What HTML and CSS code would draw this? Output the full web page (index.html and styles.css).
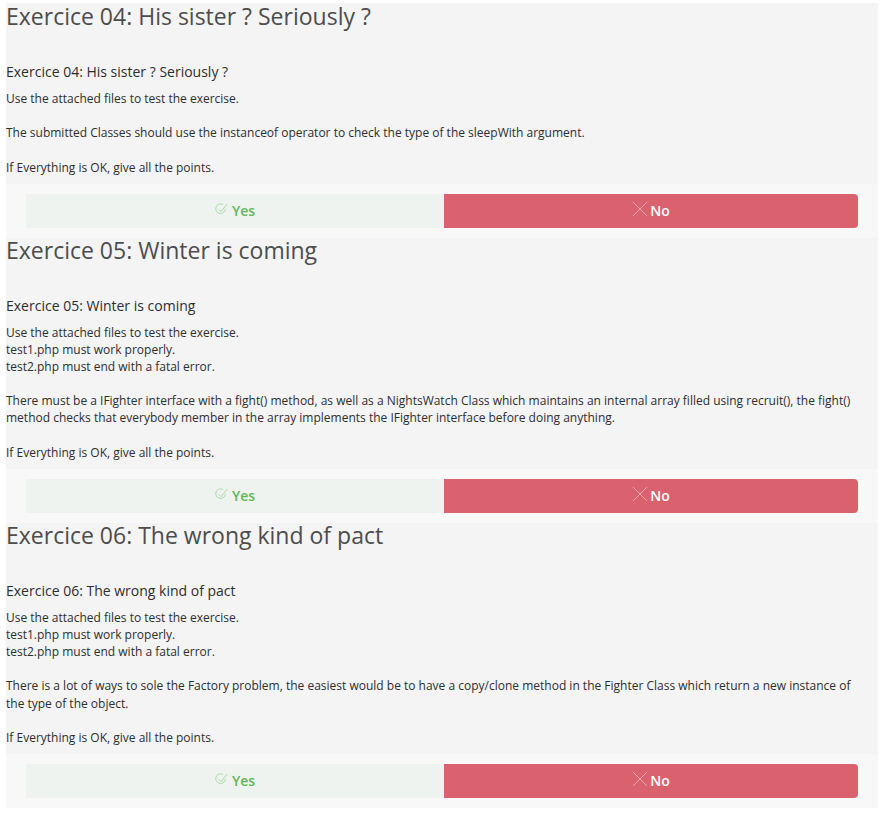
FILE: index.html
```html
<!DOCTYPE html>
<html>
<head>
<meta charset="utf-8">
<link rel="stylesheet" href="styles.css">
</head>
<body>
<div class="page">
  <section class="exercise first">
    <h3 class="ex-title">Exercice 04: His sister ? Seriously ?</h3>
    <h4 class="ex-sub">Exercice 04: His sister ? Seriously ?</h4>
    <p class="ex-body">Use the attached files to test the exercise.<br><br>The submitted Classes should use the instanceof operator to check the type of the sleepWith argument.<br><br>If Everything is OK, give all the points.</p>
  </section>
  <div class="actions">
    <button class="btn yes"><svg class="ico-check" viewBox="0 0 14 14" width="13" height="13"><path d="M11.2 6.2A5.2 5.2 0 1 1 8.6 1.6" fill="none" stroke="#9fd49f" stroke-width="0.9"/><path d="M3.8 6.6L6.4 9.3L13.2 1" fill="none" stroke="#9fd49f" stroke-width="0.9"/></svg><span>Yes</span></button>
    <button class="btn no"><svg class="ico-x" viewBox="0 0 16 16" width="16" height="16"><path d="M1 1L15 15M15 1L1 15" stroke="#f0a2aa" stroke-width="1"/></svg><span>No</span></button>
  </div>

  <section class="exercise">
    <h3 class="ex-title">Exercice 05: Winter is coming</h3>
    <h4 class="ex-sub">Exercice 05: Winter is coming</h4>
    <p class="ex-body">Use the attached files to test the exercise.<br>test1.php must work properly.<br>test2.php must end with a fatal error.<br><br>There must be a IFighter interface with a fight() method, as well as a NightsWatch Class which maintains an internal array filled using recruit(), the fight() method checks that everybody member in the array implements the IFighter interface before doing anything.<br><br>If Everything is OK, give all the points.</p>
  </section>
  <div class="actions">
    <button class="btn yes"><svg class="ico-check" viewBox="0 0 14 14" width="13" height="13"><path d="M11.2 6.2A5.2 5.2 0 1 1 8.6 1.6" fill="none" stroke="#9fd49f" stroke-width="0.9"/><path d="M3.8 6.6L6.4 9.3L13.2 1" fill="none" stroke="#9fd49f" stroke-width="0.9"/></svg><span>Yes</span></button>
    <button class="btn no"><svg class="ico-x" viewBox="0 0 16 16" width="16" height="16"><path d="M1 1L15 15M15 1L1 15" stroke="#f0a2aa" stroke-width="1"/></svg><span>No</span></button>
  </div>

  <section class="exercise">
    <h3 class="ex-title">Exercice 06: The wrong kind of pact</h3>
    <h4 class="ex-sub">Exercice 06: The wrong kind of pact</h4>
    <p class="ex-body">Use the attached files to test the exercise.<br>test1.php must work properly.<br>test2.php must end with a fatal error.<br><br>There is a lot of ways to sole the Factory problem, the easiest would be to have a copy/clone method in the Fighter Class which return a new instance of the type of the object.<br><br>If Everything is OK, give all the points.</p>
  </section>
  <div class="actions">
    <button class="btn yes"><svg class="ico-check" viewBox="0 0 14 14" width="13" height="13"><path d="M11.2 6.2A5.2 5.2 0 1 1 8.6 1.6" fill="none" stroke="#9fd49f" stroke-width="0.9"/><path d="M3.8 6.6L6.4 9.3L13.2 1" fill="none" stroke="#9fd49f" stroke-width="0.9"/></svg><span>Yes</span></button>
    <button class="btn no"><svg class="ico-x" viewBox="0 0 16 16" width="16" height="16"><path d="M1 1L15 15M15 1L1 15" stroke="#f0a2aa" stroke-width="1"/></svg><span>No</span></button>
  </div>
</div>
</body>
</html>
```

FILE: styles.css
```css
html, body {
  margin: 0;
  padding: 0;
  background: #ffffff;
}
body {
  font-family: "Open Sans", "Noto Sans", sans-serif;
  color: #333333;
}
.page {
  margin: 3px 9px 6px 6px;
  width: 872px;
}
.exercise {
  background: #f4f4f4;
  padding: 0 8px 8px 0;
}
.exercise.first {
  padding-top: 1px;
}
.ex-title {
  margin: 0;
  font-size: 23px;
  line-height: 24px;
  font-weight: 400;
  color: #4d4d4d;
}
.ex-sub {
  margin: 36px 0 10px;
  font-size: 14px;
  line-height: 16px;
  font-weight: 400;
  color: #2e2e2e;
}
.ex-body {
  margin: 0;
  font-size: 12px;
  line-height: 17.14px;
  color: #2e2e2e;
}
.actions {
  background: #f8f8f8;
  padding: 10px 20px;
  display: flex;
}
.btn {
  flex: 1 1 0;
  height: 34px;
  border: 0;
  margin: 0;
  font-family: "Open Sans", "Noto Sans", sans-serif;
  font-size: 14px;
  font-weight: 600;
  display: flex;
  align-items: center;
  justify-content: center;
  gap: 4px;
  cursor: pointer;
}
.btn.yes {
  background: #eff3ef;
  color: #5cb85c;
  flex-basis: 418px;
  flex-grow: 0;
}
.btn.no {
  background: #d9626e;
  color: #ffffff;
  border-radius: 0 4px 4px 0;
  gap: 2px;
}
.ico-check {
  margin-top: -2px;
}
.ico-x {
  margin-top: -3px;
}
```
